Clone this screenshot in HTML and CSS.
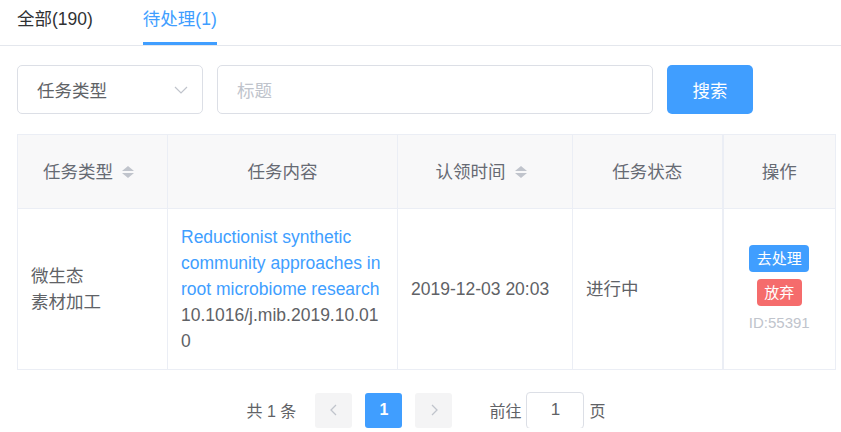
FILE: index.html
```html
<!DOCTYPE html>
<html lang="zh">
<head>
<meta charset="utf-8">
<title>任务列表</title>
<link rel="stylesheet" href="styles.css">
</head>
<body>
<div class="tabs">
  <div class="tab">全部(190)</div>
  <div class="tab active">待处理(1)</div>
</div>

<div class="content">
  <div class="search">
    <div class="select">
      <span>任务类型</span>
      <svg class="chev" width="14" height="8" viewBox="0 0 14 8"><path d="M1 1 L7 7 L13 1" fill="none" stroke="#c0c4cc" stroke-width="1.2"/></svg>
    </div>
    <div class="input"><span class="ph">标题</span></div>
    <button class="btn-search">搜索</button>
  </div>

  <table class="grid">
    <colgroup>
      <col class="c1"><col class="c2"><col class="c3"><col class="c4"><col class="c5">
    </colgroup>
    <thead>
      <tr>
        <th><span class="hcell sortable">任务类型<i class="sort"><b class="up"></b><b class="down"></b></i></span></th>
        <th><span class="hcell">任务内容</span></th>
        <th><span class="hcell sortable">认领时间<i class="sort"><b class="up"></b><b class="down"></b></i></span></th>
        <th><span class="hcell">任务状态</span></th>
        <th class="fixed"><span class="hcell">操作</span></th>
      </tr>
    </thead>
    <tbody>
      <tr>
        <td>微生态<br>素材加工</td>
        <td class="break"><span class="link">Reductionist synthetic community approaches in root microbiome research</span> 10.1016/j.mib.2019.10.010</td>
        <td>2019-12-03 20:03</td>
        <td>进行中</td>
        <td class="fixed">
          <div class="ops">
            <span class="tag blue">去处理</span>
            <span class="tag red">放弃</span>
            <span class="id">ID:55391</span>
          </div>
        </td>
      </tr>
    </tbody>
  </table>

  <div class="pager">
    <span class="total">共 1 条</span>
    <span class="pbtn"><svg width="10" height="12" viewBox="0 0 10 12"><path d="M7 1 L2 6 L7 11" fill="none" stroke="#c0c4cc" stroke-width="1.3"/></svg></span>
    <span class="pbtn on">1</span>
    <span class="pbtn"><svg width="10" height="12" viewBox="0 0 10 12"><path d="M3 1 L8 6 L3 11" fill="none" stroke="#c0c4cc" stroke-width="1.3"/></svg></span>
    <span class="jump">前往</span>
    <span class="pinput">1</span>
    <span class="unit">页</span>
  </div>
</div>
</body>
</html>
```
FILE: styles.css
```css
* { box-sizing: border-box; }
html, body { margin: 0; padding: 0; background: #fff; }
body {
  font-family: "Liberation Sans", "Noto Sans CJK SC", sans-serif;
  color: #606266;
  font-size: 17.5px;
}

.tabs {
  display: flex;
  padding-left: 17px;
  border-bottom: 1px solid #e4e7ed;
  height: 46px;
}
.tab {
  height: 45px;
  line-height: 38px;
  font-size: 17.5px;
  color: #303133;
  margin-right: 50px;
  border-bottom: 3px solid transparent;
}
.tab.active { color: #409eff; border-bottom-color: #409eff; }

.content { padding: 19px 6px 0 17px; }

.search { display: flex; gap: 14px; height: 49px; }
.select {
  width: 186px;
  border: 1px solid #dcdfe6;
  border-radius: 5px;
  display: flex;
  align-items: center;
  justify-content: space-between;
  padding: 0 14px 0 19px;
  color: #606266;
}
.chev { display: block; }
.input {
  width: 436px;
  border: 1px solid #dcdfe6;
  border-radius: 5px;
  display: flex;
  align-items: center;
  padding: 0 19px;
}
.ph { color: #c0c4cc; }
.btn-search {
  width: 86px;
  border: none;
  border-radius: 5px;
  background: #409eff;
  color: #fff;
  font: inherit;
  font-size: 17.5px;
  padding: 0;
}

.grid {
  margin-top: 20px;
  width: 818px;
  border-collapse: collapse;
  table-layout: fixed;
  border: 1px solid #ebeef5;
}
.c1 { width: 150px; }
.c2 { width: 230px; }
.c3 { width: 175px; }
.c4 { width: 150px; }
.c5 { width: 113px; }
.grid th, .grid td { border: 1px solid #ebeef5; }
.grid th {
  background: #f8f8f9;
  height: 74px;
  font-weight: normal;
  color: #666a73;
  text-align: center;
  padding: 0 10px;
}
.hcell { display: inline-flex; align-items: center; line-height: 26px; }
.hcell.sortable { padding-right: 8px; }
.sort {
  display: inline-flex;
  flex-direction: column;
  gap: 2px;
  margin-left: 9px;
}
.sort b { display: block; width: 0; height: 0; border-left: 6px solid transparent; border-right: 6px solid transparent; }
.sort .up { border-bottom: 5px solid #c0c4cc; }
.sort .down { border-top: 5px solid #c0c4cc; }

.grid td {
  padding: 15px 13px;
  line-height: 26px;
  vertical-align: middle;
  color: #606266;
}
.grid td.break { word-break: break-all; }
.grid td.break .link { word-break: normal; }
.link { color: #409eff; }
.grid .fixed { border-left: 2px solid #ebeef5; }

.ops { display: flex; flex-direction: column; align-items: center; gap: 7px; }
.tag {
  display: block;
  height: 27px;
  line-height: 27px;
  padding: 0 7.5px;
  border-radius: 4px;
  font-size: 15px;
  color: #fff;
}
.tag.blue { background: #409eff; }
.tag.red { background: #f56c6c; }
.id { font-size: 15px; line-height: 20px; color: #c0c4cc; }

.pager {
  display: flex;
  justify-content: center;
  align-items: center;
  margin-top: 22px;
  width: 818px;
  height: 36px;
  font-size: 16px;
  color: #606266;
}
.total { margin-right: 19px; }
.pbtn {
  width: 37px;
  height: 35px;
  background: #f4f4f5;
  border-radius: 3px;
  display: flex;
  align-items: center;
  justify-content: center;
  margin-right: 13px;
  font-weight: bold;
  color: #606266;
}
.pbtn.on { background: #409eff; color: #fff; }
.jump { margin-left: 24px; }
.pinput {
  width: 58px;
  height: 37px;
  border: 1px solid #dcdfe6;
  border-radius: 4px;
  margin: 0 5px;
  display: flex;
  align-items: center;
  justify-content: center;
  font-size: 17px;
}
```
